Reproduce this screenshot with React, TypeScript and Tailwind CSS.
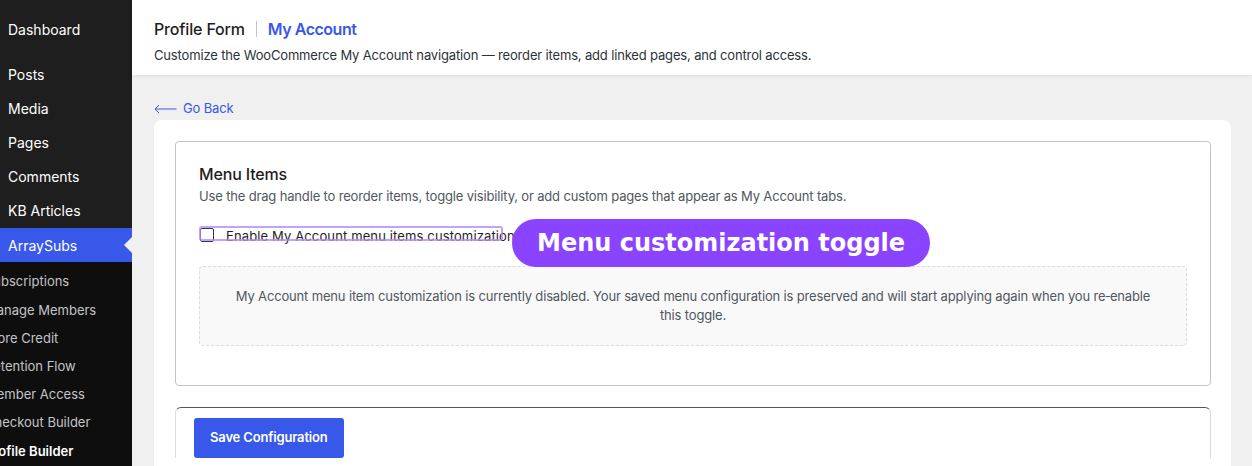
import React from "react";

const topItems = ["Posts", "Media", "Pages", "Comments", "KB Articles"];
const subItems = [
  "Subscriptions",
  "Manage Members",
  "Store Credit",
  "Retention Flow",
  "Member Access",
  "Checkout Builder",
];

export default function App() {
  return (
    <div
      className="flex h-[466px] w-[1252px] overflow-hidden bg-[#f0f0f0] tracking-[-0.01em]"
      style={{ fontFamily: "Inter, 'Noto Sans', sans-serif" }}
    >
      {/* Sidebar */}
      <aside className="flex w-[132px] shrink-0 flex-col overflow-hidden bg-[#1e1e1e] text-[14px] tracking-normal text-white">
        <div className="pt-[12px]">
          <div className="flex h-[34px] items-center pl-[8px]">Dashboard</div>
        </div>
        <div className="h-[11px]" />
        {topItems.map((t) => (
          <div key={t} className="flex h-[34.2px] items-center pl-[8px]">
            {t}
          </div>
        ))}
        <div className="relative flex h-[34.2px] items-center bg-[#3858e9] pl-[8px]">
          ArraySubs
          <span className="absolute right-0 top-1/2 -translate-y-1/2 border-y-[8px] border-r-[8px] border-y-transparent border-r-[#f0f0f0]" />
        </div>
        <div className="flex-1 bg-[#0e0e0e] pt-[6px] text-[13px]">
          {subItems.map((t) => (
            <div key={t} className="-ml-[15px] flex h-[28.2px] items-center whitespace-nowrap text-[#c3c4c7]">
              {t}
            </div>
          ))}
          <div className="-ml-[15px] flex h-[28.2px] items-center whitespace-nowrap font-semibold text-white">
            Profile Builder
          </div>
        </div>
      </aside>

      {/* Main */}
      <main className="flex min-w-0 flex-1 flex-col">
        <header className="relative z-10 h-[75px] shrink-0 bg-white px-[22px] pt-[18px] shadow-[0_1px_4px_rgba(0,0,0,0.08)]">
          <div className="flex h-[22px] items-center text-[16px]">
            <span className="font-medium text-[#1e1e1e]">Profile Form</span>
            <span className="mx-[11px] h-[16px] w-px bg-[#c3c4c7]" />
            <span className="font-semibold tracking-[-0.03em] text-[#3858e9]">My Account</span>
          </div>
          <p className="mt-[6px] text-[13px] leading-[18px] text-[#2c3338]">
            Customize the WooCommerce My Account navigation — reorder items, add linked pages, and control access.
          </p>
        </header>

        <div className="flex flex-1 flex-col pl-[22px] pr-[21px]">
          <a className="mt-[25px] flex h-[18px] items-center gap-[6px] text-[13px] text-[#3858e9]">
            <svg width="23" height="10" viewBox="0 0 23 10" fill="none" stroke="#3858e9" strokeWidth="1">
              <path d="M22.5 5H1M5 1L1 5l4 4" />
            </svg>
            Go Back
          </a>

          <div className="mt-[2px] flex-1 rounded-t-[8px] bg-white pl-[21px] pr-[20px] pt-[21px]">
            <section className="rounded-[4px] border border-[#c3c4c7] px-[23px] pb-[39px] pt-[21px]">
              <h2 className="text-[16px] font-medium leading-[22px] text-[#1e1e1e]">Menu Items</h2>
              <p className="mt-[2px] text-[13px] leading-[18px] text-[#50575e]">
                Use the drag handle to reorder items, toggle visibility, or add custom pages that appear as My Account tabs.
              </p>

              <div className="relative mt-[22px] flex h-[15px] items-center">
                <span className="ml-[1px] h-[14px] w-[14px] rounded-[2px] border border-[#3b3154] bg-white" />
                <span className="ml-[12px] translate-y-[2px] text-[13px] tracking-[0.01em] text-[#1e1e1e]">
                  Enable My Account menu items customization
                </span>
                <span className="absolute left-0 top-[-1px] h-[15px] w-[304px] rounded-[3px] border-2 border-[#b18cf8]/80" />
                <span
                  className="absolute left-[313px] top-[-8px] flex h-[48px] items-center whitespace-nowrap rounded-full bg-[#8a44ff] px-[25px] text-[24px] font-bold tracking-normal text-white"
                  style={{ fontFamily: "'DejaVu Sans', sans-serif" }}
                >
                  Menu customization toggle
                </span>
              </div>

              <div className="mt-[24px] rounded-[4px] border border-dashed border-[#dcdcde] bg-[#f9f9f9] px-[32px] py-[20px] text-center text-[13px] leading-[19px] text-[#50575e]">
                My Account menu item customization is currently disabled. Your saved menu configuration is preserved and will start applying again when you re&#8209;enable this toggle.
              </div>
            </section>

            <div className="mt-[21px] rounded-t-[6px] border-x border-t border-x-[#dcdcde] border-t-[#50575e] px-[18px] pt-[10px]">
              <button className="h-[40px] rounded-[3px] bg-[#3858e9] px-[16px] text-[13px] font-semibold text-white">
                Save Configuration
              </button>
            </div>
          </div>
        </div>
      </main>
    </div>
  );
}
